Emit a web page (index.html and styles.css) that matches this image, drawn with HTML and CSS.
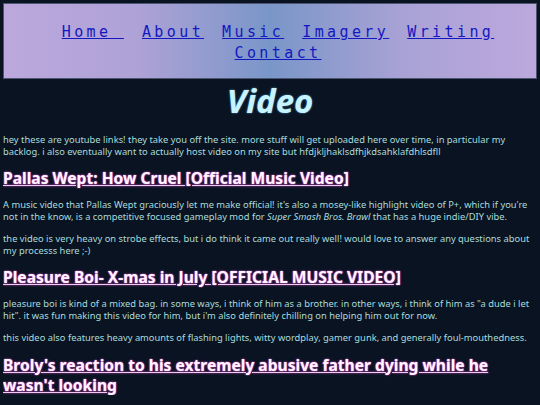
FILE: index.html
```html
<!DOCTYPE html>
<html>
<head>
<meta charset="utf-8">
<link rel="stylesheet" href="styles.css">
</head>
<body>
<nav class="nav">
  <a href="#">Home&nbsp;</a>
  <a href="#">About</a>
  <a href="#">Music</a>
  <a href="#">Imagery</a>
  <a href="#">Writing</a>
  <a href="#">Contact</a>
</nav>
<h1 class="title">Video</h1>
<p class="text">hey these are youtube links! they take you off the site. more stuff will get uploaded here over time, in particular my backlog. i also eventually want to actually host video on my site but hfdjkljhaklsdfhjkdsahklafdhlsdfll</p>
<h2 class="vid"><a href="#">Pallas Wept: How Cruel [Official Music Video]</a></h2>
<p class="text">A music video that Pallas Wept graciously let me make official! it's also a mosey-like highlight video of P+, which if you're not in the know, is a competitive focused gameplay mod for <em>Super Smash Bros. Brawl</em> that has a huge indie/DIY vibe.</p>
<p class="text">the video is very heavy on strobe effects, but i do think it came out really well! would love to answer any questions about my processs here ;-)</p>
<h2 class="vid"><a href="#">Pleasure Boi- X-mas in July [OFFICIAL MUSIC VIDEO]</a></h2>
<p class="text">pleasure boi is kind of a mixed bag. in some ways, i think of him as a brother. in other ways, i think of him as "a dude i let hit". it was fun making this video for him, but i'm also definitely chilling on helping him out for now.</p>
<p class="text">this video also features heavy amounts of flashing lights, witty wordplay, gamer gunk, and generally foul-mouthedness.</p>
<h2 class="vid"><a href="#">Broly's reaction to his extremely abusive father dying while he wasn't looking</a></h2>
</body>
</html>
```

FILE: styles.css
```css
html, body {
  background: #0a1322;
}
body {
  margin: 3px;
  font-family: "Noto Sans", "DejaVu Sans", sans-serif;
}
.nav {
  display: flex;
  flex-wrap: wrap;
  justify-content: center;
  column-gap: 18px;
  padding: 18px 0 14px 16px;
  border: 1px solid #4c5570;
  background: linear-gradient(to right, #bca8dd 0%, #aea2d6 25%, #7a96c8 50%, #a9a2d5 75%, #bca8dd 100%);
}
.nav a {
  font-family: "DejaVu Sans Mono", monospace;
  font-size: 15px;
  line-height: 21px;
  letter-spacing: 3.4px;
  font-weight: normal;
  color: #1418c0;
  text-decoration: underline;
}
.title {
  margin: 3px 0 14px;
  text-align: center;
  font-size: 33px;
  line-height: 38px;
  font-style: italic;
  font-weight: bold;
  color: #c6f3ff;
  text-shadow: 0 0 2px #4f9ac8;
}
.text {
  margin: 11px 0;
  font-size: 9.35px;
  line-height: 11.5px;
  color: #a9dcdc;
}
.title + .text {
  margin-top: 0;
}
.vid {
  margin: 0;
  font-size: 15.6px;
  line-height: 20px;
  font-weight: bold;
}
.vid a {
  color: #fff4ff;
  text-decoration: underline;
  text-decoration-color: #f3c8f3;
  text-shadow: 0 0 2px #d050c8, 0 0 1px #d050c8;
}
```
